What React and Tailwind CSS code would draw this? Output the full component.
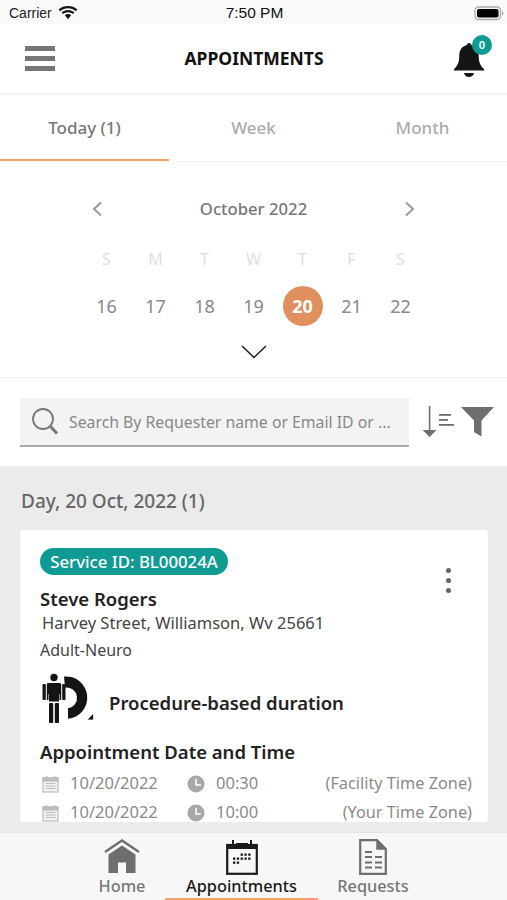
import React from "react";

function Wifi() {
  return (
    <svg width="20" height="14" viewBox="0 0 20 14" fill="#111">
      <path d="M10 2.200c3 0 5.700 1.100 7.800 3l1.600-1.800C16.900 1.100 13.600 0 10 0S3.100 1.100.6 3.400l1.600 1.800c2.100-1.900 4.800-3 7.800-3z" />
      <path d="M10 6.200c1.900 0 3.600.7 4.900 1.900l1.600-1.800C14.800 4.800 12.500 3.900 10 3.900s-4.800.9-6.500 2.400l1.600 1.800C6.400 6.900 8.100 6.200 10 6.200z" />
      <path d="M10 8.100c-1.200 0-2.300.4-3.100 1.200L10 13.200l3.100-3.900c-.8-.8-1.900-1.200-3.100-1.200z" />
    </svg>
  );
}

function Battery() {
  return (
    <svg width="30" height="15" viewBox="0 0 30 15">
      <rect x="1" y="1" width="25.500" height="12.500" rx="3.500" fill="none" stroke="#aaa" strokeWidth="1.300" />
      <rect x="3" y="3" width="21.500" height="8.500" rx="1.800" fill="#000" />
      <path d="M28 5.200c.9.300 1.400 1.100 1.400 2s-.5 1.700-1.400 2z" fill="#aaa" />
    </svg>
  );
}

function Menu() {
  return (
    <svg width="30" height="25" viewBox="0 0 30 25" fill="#777">
      <rect y="0" width="30" height="5" />
      <rect y="10" width="30" height="5" />
      <rect y="20" width="30" height="5" />
    </svg>
  );
}

function Bell() {
  return (
    <svg width="32" height="36" viewBox="0 0 32 36" fill="#141414">
      <path d="M16 1c1.300 0 2.300 1 2.400 2.300 4.700 1.100 7.300 5 7.300 10 0 6.500 1.300 10.300 5.300 13.800v1.400H1v-1.400c4-3.500 5.300-7.300 5.300-13.800 0-5 2.600-8.900 7.300-10C13.700 2 14.700 1 16 1z" />
      <path d="M11 31h10c-.5 2.500-2.600 4-5 4s-4.500-1.500-5-4z" />
    </svg>
  );
}

function Chevron({ dir }) {
  return (
    <svg width="12" height="16" viewBox="0 0 12 16" fill="none" stroke="#999" strokeWidth="2">
      {dir === "left" ? <path d="M10 1.500 3 8l7 6.500" /> : <path d="M2 1.500 9 8l-7 6.500" />}
    </svg>
  );
}

function Search() {
  return (
    <svg width="28" height="28" viewBox="0 0 28 28" fill="none" stroke="#777" strokeWidth="1.800">
      <circle cx="12" cy="12" r="10" />
      <path d="M19.500 19.500 26 26.500" strokeWidth="3" />
    </svg>
  );
}

function Sort() {
  return (
    <svg width="34" height="34" viewBox="0 0 34 34" fill="#6e6e6e">
      <rect x="7.800" y="1" width="1.600" height="25" />
      <path d="M1.500 25h14L8.600 32z" />
      <rect x="18" y="9" width="12" height="1.800" />
      <rect x="18" y="14" width="9" height="1.800" />
      <rect x="18" y="19" width="15" height="1.800" />
    </svg>
  );
}

function Filter() {
  return (
    <svg width="34" height="30" viewBox="0 0 34 30" fill="#6e6e6e">
      <path d="M0 0h33L20.500 13.500V29.500L13 25V13.500z" />
    </svg>
  );
}

function Procedure() {
  return (
    <svg width="52" height="52" viewBox="0 0 52 52" fill="#141414">
      <circle cx="12" cy="4.500" r="3.700" />
      <path d="M6.500 10h11c1 0 1.700.6 1.700 1.600V27h-1.700v-6h-.5v7.500h-10V21h-.5v6H4.800V11.600c0-1 .7-1.600 1.700-1.600z" />
      <rect x="0.500" y="11" width="3.300" height="16" rx="1" />
      <rect x="20.200" y="11" width="3.300" height="16" rx="1" />
      <rect x="7" y="30" width="4.200" height="20" rx="1" />
      <rect x="12.800" y="30" width="4.200" height="20" rx="1" />
      <path d="M22 3.500A21 21 0 1 1 26 45.800V35.300A10.500 10.500 0 1 0 23 14.500Z" />
      <path d="M45 47l6.500-7v7z" fill="#141414" stroke="#fff" strokeWidth="0.800" />
    </svg>
  );
}

function SmallCal() {
  return (
    <svg width="17" height="18" viewBox="0 0 17 18" fill="none" stroke="#bcbcbc" strokeWidth="1.200">
      <rect x="1" y="3" width="15" height="14" fill="#f2f2f2" />
      <rect x="1" y="3" width="15" height="3" fill="#bcbcbc" />
      <path d="M4.500 1v3.500M12.500 1v3.500" strokeWidth="1.500" />
      <path d="M3.500 8.500h10M3.500 11h10M3.500 13.500h10" strokeWidth="1" />
    </svg>
  );
}

function Clock() {
  return (
    <svg width="18" height="18" viewBox="0 0 18 18">
      <circle cx="9" cy="9" r="8.500" fill="#a8a8a8" />
      <path d="M9 3.800V10h5" fill="none" stroke="#fff" strokeWidth="1.500" />
    </svg>
  );
}

function Home() {
  return (
    <svg width="36" height="35" viewBox="0 0 36 35">
      <path d="M1 13 18 1.500 35 13" fill="none" stroke="#6e6e6e" strokeWidth="2.400" />
      <path d="M18 6.500 31.500 15.500V34H22V23.500H14V34H4.500V15.500z" fill="#6e6e6e" />
    </svg>
  );
}

function CalNav() {
  const cells = [];
  for (let r = 0; r < 3; r++) {
    for (let c = 0; c < 5; c++) {
      if ((r === 0 && c < 2) || (r === 2 && c > 1)) continue;
      cells.push(<rect key={`${r}-${c}`} x={7 + c * 3.800} y={14.500 + r * 4} width="2.300" height="2.300" fill="#1a1a1a" />);
    }
  }
  return (
    <svg width="32" height="36" viewBox="0 0 32 36">
      <rect x="1.200" y="6" width="29.600" height="28.800" fill="none" stroke="#1a1a1a" strokeWidth="2.200" />
      <rect x="1" y="6" width="30" height="4" fill="#1a1a1a" />
      <rect x="10" y="4" width="12" height="4" fill="#1a1a1a" />
      <rect x="6" y="1" width="2" height="6" fill="#1a1a1a" />
      <rect x="24" y="1" width="2" height="6" fill="#1a1a1a" />
      {cells}
    </svg>
  );
}

function Doc() {
  return (
    <svg width="28" height="36" viewBox="0 0 28 36" fill="none" stroke="#6e6e6e">
      <path d="M1.200 1.200H18L26.800 10v24.800H1.200z" strokeWidth="2.200" fill="#f7f7f7" />
      <path d="M18 1.200V10h8.800z" fill="#6e6e6e" strokeWidth="1.500" />
      <path d="M6 13h7M6 18h7M16 18h7M6 23.500h7M16 23.500h7M6 28.500h7M16 28.500h7" strokeWidth="2" />
    </svg>
  );
}

const weekdays = ["S", "M", "T", "W", "T", "F", "S"];
const days = [16, 17, 18, 19, 20, 21, 22];

function TimeRow({ time, zone }) {
  return (
    <div className="flex h-[29px] items-center text-[16.500px] text-[#8a8a8a]">
      <span className="ml-[2px] flex w-[28px] shrink-0"><SmallCal /></span>
      <span className="w-[117px] shrink-0">10/20/2022</span>
      <span className="flex w-[29px] shrink-0"><Clock /></span>
      <span>{time}</span>
      <span className="ml-auto text-[16.300px]">{zone}</span>
    </div>
  );
}

export default function App() {
  return (
    <div className="flex h-[900px] w-[507px] flex-col overflow-hidden bg-white font-['Noto_Sans',sans-serif]">
      <div className="flex h-[24px] shrink-0 items-center bg-[#f9f9f9] pl-[9px] pr-[3px] pt-[2px]">
        <div className="flex flex-1 items-center gap-[6px]">
          <span className="font-['Liberation_Sans',sans-serif] text-[14px] text-[#222]">Carrier</span>
          <Wifi />
        </div>
        <span className="mr-[4px] font-['Liberation_Sans',sans-serif] text-[15.500px] text-[#111]">7:50 PM</span>
        <div className="flex flex-1 justify-end"><Battery /></div>
      </div>

      <div className="flex h-[71px] shrink-0 items-center justify-between border-b-[2px] border-[#f3f3f3] pl-[25px] pr-[15px]">
        <Menu />
        <span className="text-[17.500px] font-bold text-[#111]">APPOINTMENTS</span>
        <div className="relative h-[36px] w-[39px] pt-[1px]">
          <Bell />
          <span className="absolute right-0 top-[-6px] flex h-[20px] w-[20px] items-center justify-center rounded-full bg-[#0f9b94] text-[11px] font-semibold leading-none text-white">0</span>
        </div>
      </div>

      <div className="grid h-[67px] shrink-0 grid-cols-3 border-b-[1px] border-[#f3f3f3] text-[17px] font-medium text-[#ababab]">
        <div className="flex items-center justify-center border-b-[2px] border-[#f4a26f] pt-[2px] text-[#777]">Today (1)</div>
        <div className="flex items-center justify-center pb-[2px] pt-[2px]">Week</div>
        <div className="flex items-center justify-center pb-[2px] pt-[2px]">Month</div>
      </div>

      <div className="flex h-[216px] shrink-0 flex-col items-center border-b-[1px] border-[#efefef]">
        <div className="mt-[35px] flex h-[24px] w-[325px] items-center justify-between">
          <Chevron dir="left" />
          <span className="text-[16.700px] font-medium text-[#777]">October 2022</span>
          <Chevron dir="right" />
        </div>
        <div className="mt-[26px] grid h-[24px] w-[343px] grid-cols-7 items-center text-center text-[16px] text-[#dedede]">
          {weekdays.map((d, i) => <span key={i}>{d}</span>)}
        </div>
        <div className="mt-[15px] grid h-[40px] w-[343px] grid-cols-7 items-center justify-items-center text-[18px] text-[#888]">
          {days.map((d) =>
            d === 20 ? (
              <span key={d} className="flex h-[40px] w-[40px] items-center justify-center rounded-full bg-[#e0905f] font-bold text-white">{d}</span>
            ) : (
              <span key={d}>{d}</span>
            )
          )}
        </div>
        <svg className="mt-[19px]" width="26" height="14" viewBox="0 0 26 14" fill="none" stroke="#222" strokeWidth="1.600">
          <path d="M1 1l12 11.500L25 1" />
        </svg>
      </div>

      <div className="flex h-[88px] shrink-0 items-center pl-[20px] pr-[12px]">
        <div className="flex h-[49px] w-[389px] items-center gap-[10px] border-b-[2px] border-[#aaa] bg-[#f3f3f3] pl-[11px]">
          <Search />
          <span className="whitespace-nowrap pt-[4px] text-[15.800px] text-[#888]">Search By Requester name or Email ID or ...</span>
        </div>
        <div className="ml-[12px]"><Sort /></div>
        <div className="ml-[6px]"><Filter /></div>
      </div>

      <div className="min-h-0 flex-1 overflow-hidden bg-[#ebebeb]">
        <div className="flex h-[64px] items-center pl-[21px] pt-[7px] text-[19px] font-medium text-[#666]">Day, 20 Oct, 2022 (1)</div>
        <div className="relative mx-[20px] h-[292px] w-[468px] overflow-hidden rounded-[4px] bg-white px-[20px] pr-[16px] pt-[18px]">
          <div className="flex h-[27px] w-[188px] items-center justify-center rounded-full bg-[#0f9b94] text-[16.800px] font-medium text-white">Service ID: BL00024A</div>
          <div className="mt-[10px] text-[18.500px] font-semibold leading-[28px] text-[#222]">Steve Rogers</div>
          <div className="ml-[2px] mt-[-3px] text-[16.500px] leading-[26px] text-[#444]">Harvey Street, Williamson, Wv 25661</div>
          <div className="mt-[2px] text-[16px] leading-[24px] text-[#444]">Adult-Neuro</div>
          <div className="mt-[10px] flex h-[54px] items-center gap-[15px] pl-[2px]">
            <Procedure />
            <span className="pt-[7px] text-[18.500px] font-semibold text-[#222]">Procedure-based duration</span>
          </div>
          <div className="mt-[12px] text-[18.500px] font-semibold leading-[28px] text-[#222]">Appointment Date and Time</div>
          <div className="mt-[3px]">
            <TimeRow time="00:30" zone="(Facility Time Zone)" />
            <TimeRow time="10:00" zone="(Your Time Zone)" />
          </div>
          <div className="absolute right-[37px] top-[38px] flex flex-col gap-[5px]">
            <span className="h-[5px] w-[5px] rounded-full bg-[#666]" />
            <span className="h-[5px] w-[5px] rounded-full bg-[#666]" />
            <span className="h-[5px] w-[5px] rounded-full bg-[#666]" />
          </div>
        </div>
      </div>

      <div className="flex h-[68px] shrink-0 justify-start border-t-[1px] border-[#e4e4e4] bg-[#f7f7f7] pl-[79px] text-[16.300px] font-medium text-[#777]">
        <div className="flex w-[86px] flex-col items-center pt-[6px]">
          <Home />
          <span className="mt-[1px] leading-[22px]">Home</span>
        </div>
        <div className="flex w-[153px] flex-col items-center border-b-[2px] border-[#f4a26f] pb-[1px] pt-[6px] text-[#1a1a1a]">
          <CalNav />
          <span className="leading-[22px]">Appointments</span>
        </div>
        <div className="flex w-[110px] flex-col items-center pt-[6px]">
          <Doc />
          <span className="leading-[22px]">Requests</span>
        </div>
      </div>
    </div>
  );
}
